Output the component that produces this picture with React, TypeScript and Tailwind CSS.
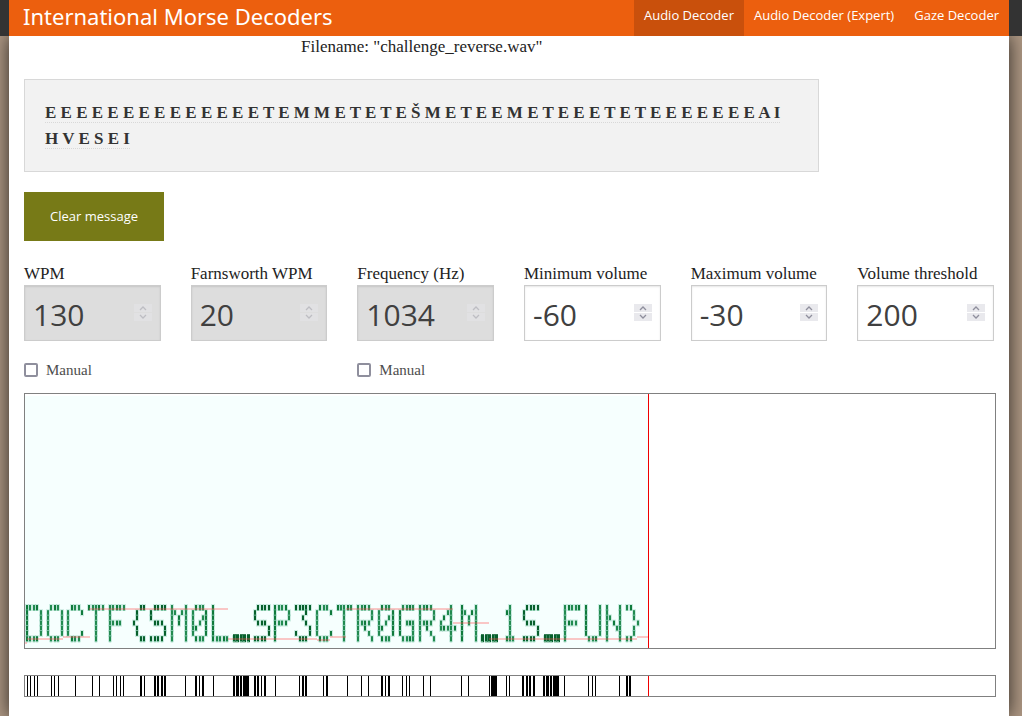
import React from "react";

const GLYPHS: Record<string, string[]> = {
  D: ["####.", "#...#", "#...#", "#...#", "#...#", "#...#", "####."],
  O: [".###.", "#...#", "#...#", "#...#", "#...#", "#...#", ".###."],
  C: [".###.", "#...#", "#....", "#....", "#....", "#...#", ".###."],
  T: ["#####", "..#..", "..#..", "..#..", "..#..", "..#..", "..#.."],
  F: ["#####", "#....", "#....", "####.", "#....", "#....", "#...."],
  "{": ["...##", "..#..", "..#..", ".#...", "..#..", "..#..", "...##"],
  S: [".####", "#....", "#....", ".###.", "....#", "....#", "####."],
  M: ["#...#", "##.##", "#.#.#", "#.#.#", "#...#", "#...#", "#...#"],
  "0": [".###.", "#...#", "#..##", "#.#.#", "##..#", "#...#", ".###."],
  L: ["#....", "#....", "#....", "#....", "#....", "#....", "#####"],
  _: [".....", ".....", ".....", ".....", ".....", ".....", "#####"],
  P: ["####.", "#...#", "#...#", "####.", "#....", "#....", "#...."],
  "3": ["#####", "...#.", "..#..", "...#.", "....#", "#...#", ".###."],
  R: ["####.", "#...#", "#...#", "####.", "#.#..", "#..#.", "#...#"],
  G: [".####", "#....", "#....", "#.###", "#...#", "#...#", ".####"],
  "4": ["...#.", "..##.", ".#.#.", "#..#.", "#####", "...#.", "...#."],
  "1": ["..#..", ".##..", "..#..", "..#..", "..#..", "..#..", ".###."],
  U: ["#...#", "#...#", "#...#", "#...#", "#...#", "#...#", ".###."],
  N: ["#...#", "#...#", "##..#", "#.#.#", "#..##", "#...#", "#...#"],
  "}": ["##...", "..#..", "..#..", "...#.", "..#..", "..#..", "##..."],
};

const SIGNAL = "DOCTF{SM0L_SP3CTR0GR4M_1S_FUN}";

// [x1, x2, y] of each stretch of the detected-frequency trace
const TRACE = [
  [0, 2, 249], [2, 38, 245], [38, 65, 243], [64, 203, 215], [203, 292, 245],
  [292, 305, 246], [305, 321, 243], [321, 428, 215], [428, 464, 229],
  [464, 612, 245], [612, 623, 243],
];

// [x, width] of each key-down mark
const MARKS = [
  [2, 1], [5, 1], [9, 1], [12, 1], [26, 1], [29, 1], [33, 1], [50, 1], [67, 1], [74, 1],
  [88, 1], [91, 1], [95, 1], [98, 1], [115, 2], [119, 1], [129, 2], [132, 2], [136, 2], [139, 2],
  [160, 1], [170, 2], [174, 1], [177, 2], [188, 1], [208, 2], [211, 3], [215, 2], [218, 6],
  [229, 2], [232, 2], [236, 1], [239, 2], [250, 1], [274, 1], [277, 2], [280, 2], [298, 1],
  [301, 2], [322, 1], [336, 1], [343, 1], [356, 2], [360, 1], [363, 2], [377, 1], [381, 1],
  [384, 1], [398, 1], [405, 1], [436, 1], [443, 1], [464, 1], [466, 6], [481, 1], [484, 1],
  [497, 2], [501, 2], [504, 2], [508, 2], [518, 2], [521, 3], [525, 2], [528, 6], [539, 1],
  [563, 1], [567, 1], [570, 1], [594, 1], [601, 2], [604, 2],
];

function Spectrogram() {
  const cells: React.ReactNode[] = [];
  SIGNAL.split("").forEach((ch, i) => {
    const strong = "{S_3".includes(ch);
    GLYPHS[ch].forEach((row, r) => {
      row.split("").forEach((on, c) => {
        if (on !== "#") return;
        const x = Math.round(1 + i * 20.7 + c * 3.46);
        const y = 211 + r * 5.2;
        const edge = r === 0 || r === 6;
        const fill = strong ? "#07602c" : (c + i) % 3 === 0 ? "#107a3c" : "#228a50";
        cells.push(
          <g key={`${i}-${r}-${c}`}>
            <rect x={x - 1} y={y - 1} width={4} height={7} fill="#8fd0ba" opacity={0.4} />
            <rect x={x} y={y - (ch === "_" ? 2 : 0)} width={ch === "_" ? 3 : 2} height={ch === "_" ? 8 : edge ? 5 : 4.8} fill={fill} />
            {edge && <rect x={x} y={y + 5} width={2} height={1} fill="#79c19d" />}
          </g>
        );
      });
    });
  });
  return (
    <svg className="block h-[254px] w-full" role="img" aria-label="Spectrogram">
      <rect x={0} y={2} width={623} height={252} fill="#f6fffe" />
      {cells}
      {TRACE.map(([a, b, y]) => (
        <rect key={a} x={a} y={y - 1} width={b - a} height={2} fill="#ff5050" opacity={0.32} />
      ))}
      <rect x={623} y={0} width={1} height={254} fill="#f00000" />
    </svg>
  );
}

function Timeline() {
  return (
    <svg className="block h-5 w-full" role="img" aria-label="Signal timeline" shapeRendering="crispEdges">
      {MARKS.map(([x, w]) => (
        <rect key={x} x={x} y={0} width={w} height={20} fill="#000" />
      ))}
      <rect x={623} y={0} width={1} height={20} fill="#f00000" />
    </svg>
  );
}

type FieldProps = { id: string; label: string; value: number; disabled?: boolean; manual?: boolean };

function Field({ id, label, value, disabled, manual }: FieldProps) {
  return (
    <div>
      <label htmlFor={id} className="block pt-px text-[17px] leading-[23px] whitespace-nowrap text-[#222]">
        {label}
      </label>
      <div className="relative">
        <input
          id={id}
          type="number"
          defaultValue={value}
          disabled={disabled}
          className="block h-14 w-full appearance-none border border-[#ccc] bg-white pt-0.5 pr-8 pl-2 font-['Open_Sans',sans-serif] text-[30px] text-[#404040] shadow-[inset_0_1px_2px_rgba(0,0,0,0.1)] [-moz-appearance:textfield] disabled:bg-[#ddd] [&::-webkit-inner-spin-button]:appearance-none"
        />
        <svg
          className={`pointer-events-none absolute top-[19px] right-[9px] h-[17px] w-[18px] ${disabled ? "opacity-40" : ""}`}
          viewBox="0 0 18 17"
          aria-hidden="true"
        >
          <path d="M0 0h18v8H0zM0 9h18v8H0z" fill="#e9e9ed" />
          <path d="M6 6l3-3 3 3M6 11l3 3 3-3" fill="none" stroke="#8f8f9d" strokeWidth="1.3" />
        </svg>
      </div>
      {manual && (
        <label className="mt-[18px] flex h-[22px] w-fit items-center gap-2 text-[15px] text-[#4d4d4d]">
          <input
            type="checkbox"
            className="h-3.5 w-3.5 appearance-none rounded-[2px] border-2 border-[#8f8f9d] bg-white checked:bg-[#8f8f9d]"
          />
          Manual
        </label>
      )}
    </div>
  );
}

export default function App() {
  return (
    <div className="flex min-h-screen flex-col bg-[#ad9783] font-['Liberation_Serif',serif] text-[#222]">
      <header className="relative z-10 bg-[#333] pr-[13px] pl-[9px] font-['Open_Sans',sans-serif] text-white">
        <div className="flex h-9 justify-between bg-[#ec5f0e]">
          <h1 className="pl-[14px] font-['Noto_Sans',sans-serif] text-[22px] leading-8 whitespace-nowrap">
            International Morse Decoders
          </h1>
          <nav className="flex text-[13px] leading-[30px] whitespace-nowrap">
            <a href="#audio" className="bg-[#c9500c] px-[10px]">Audio Decoder</a>
            <a href="#expert" className="px-[10px]">Audio Decoder (Expert)</a>
            <a href="#gaze" className="px-[10px]">Gaze Decoder</a>
          </nav>
        </div>
      </header>
      <div className="flex grow pr-[13px] pl-[9px]">
        <main className="min-w-0 grow bg-white px-[15px] shadow-[0_0_18px_rgba(0,0,0,0.75)]">
          <div className="w-[82%]">
            <p className="pb-[21px] text-center text-[17px] leading-[22px]">Filename: "challenge_reverse.wav"</p>
            <div className="border border-[#d8d8d8] bg-[#f2f2f2] pt-5 pr-6 pb-[19px] pl-5 text-[17px] leading-[26px] font-bold text-[#333]">
              <span className="border-b border-dotted border-[#d8d8d8]">
                E E E E E E E E E E E E E E T E M M E T E T E Š M E T E E M E T E E E T E T E E E E E E E A I H V E S E I
              </span>
            </div>
          </div>
          <button type="button" className="mt-5 h-[49px] bg-[#777a17] px-[26px] font-['Open_Sans',sans-serif] text-[13px] text-white">
            Clear message
          </button>
          <form className="mt-5 grid grid-cols-6 gap-[30px]">
            <Field id="wpm" label="WPM" value={130} disabled manual />
            <Field id="farnsworth" label="Farnsworth WPM" value={20} disabled />
            <Field id="frequency" label="Frequency (Hz)" value={1034} disabled manual />
            <Field id="min-volume" label="Minimum volume" value={-60} />
            <Field id="max-volume" label="Maximum volume" value={-30} />
            <Field id="threshold" label="Volume threshold" value={200} />
          </form>
          <div className="mt-3 -mr-[2px] border border-[#808080]">
            <Spectrogram />
          </div>
          <div className="mt-[26px] -mr-[2px] border border-[#808080]">
            <Timeline />
          </div>
        </main>
      </div>
    </div>
  );
}
